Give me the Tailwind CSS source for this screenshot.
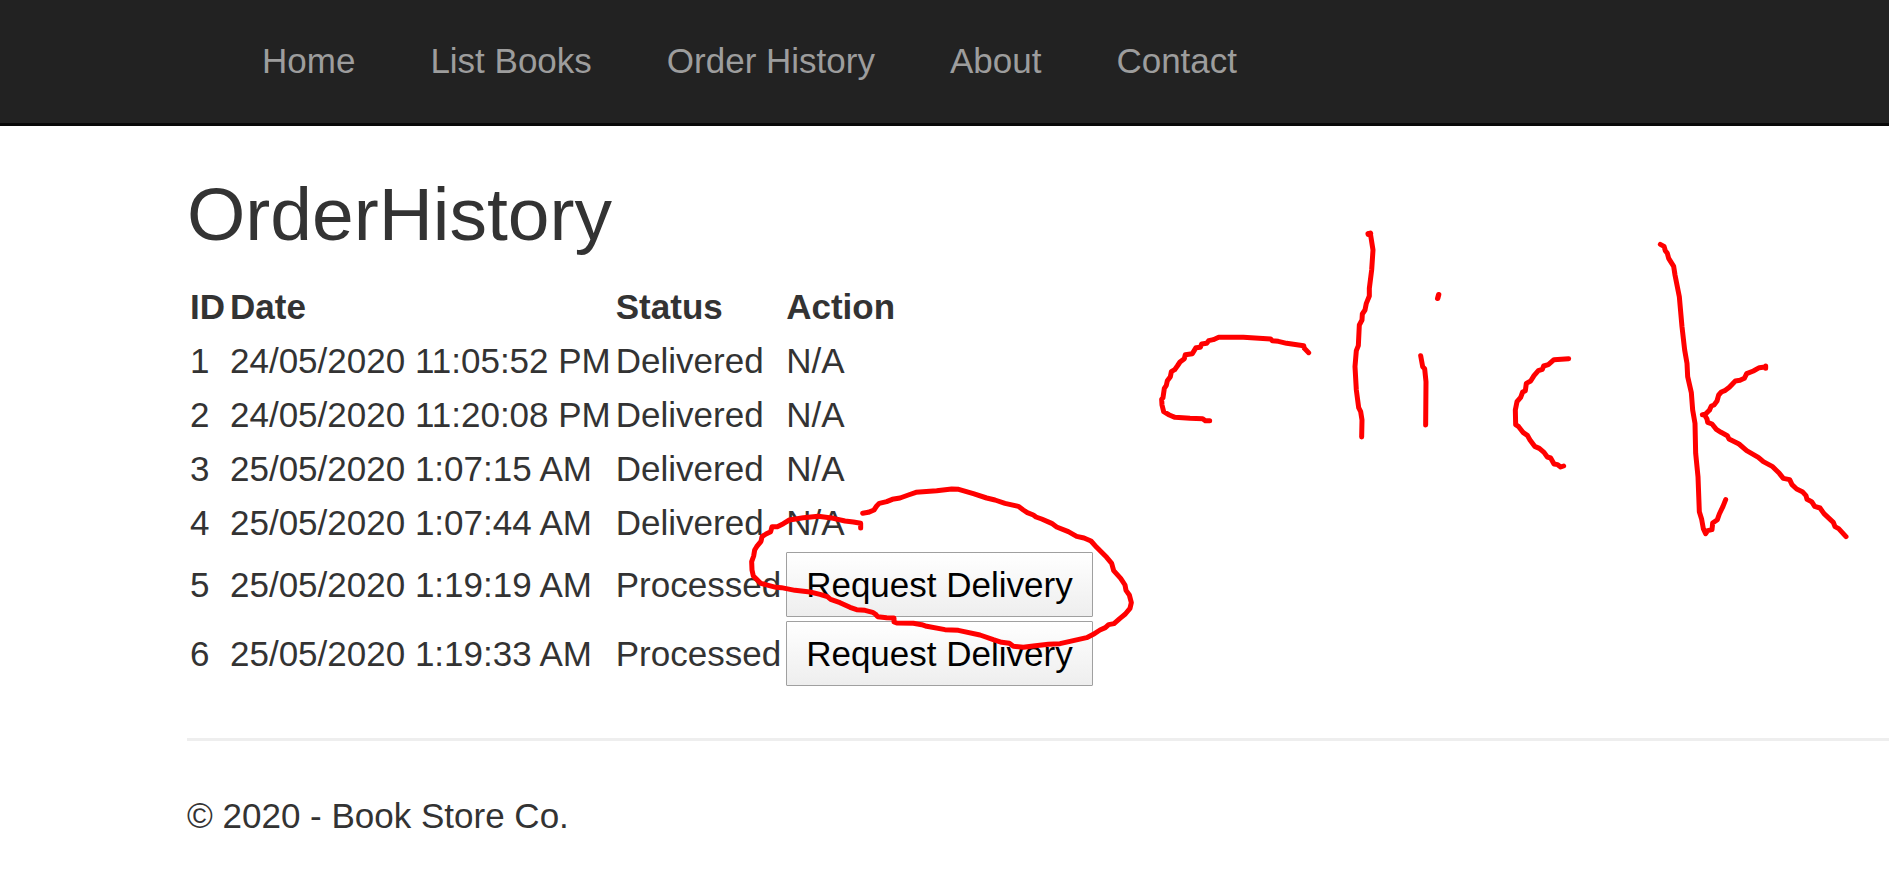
<!DOCTYPE html>
<html lang="en">
<head>
<meta charset="utf-8">
<meta name="viewport" content="width=device-width, initial-scale=1">
<title>OrderHistory</title>
<script src="https://cdn.jsdelivr.net/npm/@tailwindcss/browser@4"></script>
</head>
<body class="relative min-h-screen overflow-x-hidden bg-white font-['Liberation_Sans',Arial,sans-serif] text-[35px] leading-[50px] text-[#333]">
<header class="border-b-[3px] border-[#080808] bg-[#222]">
  <nav class="pl-[225px]">
    <ul class="flex text-[#9d9d9d]">
      <li><a href="#" class="block pt-[36px] pr-[38px] pb-[37px] pl-[37px]">Home</a></li>
      <li><a href="#" class="block pt-[36px] pr-[38px] pb-[37px] pl-[37px]">List Books</a></li>
      <li><a href="#" class="block pt-[36px] pr-[38px] pb-[37px] pl-[37px]">Order History</a></li>
      <li><a href="#" class="block pt-[36px] pr-[38px] pb-[37px] pl-[37px]">About</a></li>
      <li><a href="#" class="block pt-[36px] pr-[38px] pb-[37px] pl-[37px]">Contact</a></li>
    </ul>
  </nav>
</header>
<div class="pl-[187px]">
  <main>
    <h2 class="pt-[47px] pb-6 text-[75px] leading-[83px] font-medium">OrderHistory</h2>
    <table class="ml-px border-collapse text-left whitespace-nowrap [&_td]:py-[2px] [&_td]:pr-[3px] [&_td]:pl-[2px] [&_th]:py-[2px] [&_th]:pr-[3px] [&_th]:pl-[2px]">
      <thead>
        <tr><th>ID</th><th>Date</th><th>Status</th><th>Action</th></tr>
      </thead>
      <tbody>
        <tr><td>1</td><td>24/05/2020 11:05:52 PM</td><td>Delivered</td><td>N/A</td></tr>
        <tr><td>2</td><td>24/05/2020 11:20:08 PM</td><td>Delivered</td><td>N/A</td></tr>
        <tr><td>3</td><td>25/05/2020 1:07:15 AM</td><td>Delivered</td><td>N/A</td></tr>
        <tr><td>4</td><td>25/05/2020 1:07:44 AM</td><td>Delivered</td><td>N/A</td></tr>
        <tr><td>5</td><td>25/05/2020 1:19:19 AM</td><td>Processed</td><td><button type="button" class="block rounded-[1px] border border-[#a0a0a0] bg-linear-to-b from-white to-[#eee] px-[19px] pt-[7px] pb-[6px] text-black">Request Delivery</button></td></tr>
        <tr><td>6</td><td>25/05/2020 1:19:33 AM</td><td>Processed</td><td><button type="button" class="block rounded-[1px] border border-[#a0a0a0] bg-linear-to-b from-white to-[#eee] px-[19px] pt-[7px] pb-[6px] text-black">Request Delivery</button></td></tr>
      </tbody>
    </table>
  </main>
  <hr class="my-[50px] border-t-[3px] border-[#eee]">
  <footer><p>© 2020 - Book Store Co.</p></footer>
</div>
<!-- Freehand pen marks over the page -->
<svg class="pointer-events-none absolute top-0 left-0 h-[894px] w-[1889px] max-w-none" viewBox="0 0 1889 894" fill="none" stroke="#f00" stroke-width="15" stroke-linecap="round" stroke-linejoin="round" aria-hidden="true">
  <g transform="translate(740 470) scale(.33333)">
    <path d="M362 174V160L340 156 315 153 280 145 235 139 190 143 148 150 130 161 112 170 96 170 92 185 78 192 66 200 63 214 50 230 44 240 41 258 35 275 36 300 40 318 50 328 62 340 85 346 108 352 124 353 165 361 210 366 240 373 262 380 272 388 300 398 330 412 350 419 375 421 398 427 406 432 413 440 440 443 462 444V456L470 459 520 460 545 464 560 469 615 479 655 481 720 495 760 509 785 517 808 520 820 529 850 532 880 528 925 523 960 521 1000 512 1040 503 1060 493 1080 480 1096 473 1106 464 1122 461 1140 445 1156 432 1170 415 1174 398 1168 375 1158 361 1155 345 1142 325 1121 302 1115 280 1100 262 1070 232 1053 213 1032 204 1010 199 985 185 950 171 935 160 905 147 888 141 880 135 862 128 850 120 835 109 795 100 765 90 740 84 700 71 656 58 635 57 590 62 528 67 505 75 480 84 457 88 440 95 418 100 410 108 402 120 385 127 368 130"/>
  </g>
  <g transform="translate(1130 210) scale(.33333)">
    <path d="M536 428 523 415 521 407 470 400 445 394 427 392 422 387 340 382H266L250 389 236 392 230 400 215 402 211 412 198 413 187 431 166 434 163 446 150 456 142 468 134 479 124 485 121 500 112 512 109 526 103 535 99 563 95 568 96 585 101 605 118 615 135 622 180 625 218 626 226 632H239"/>
    <path d="M716 72 722 76 729 120 725 180 718 235V258L709 280 705 300 697 312 696 330 688 345 685 407 679 422 675 470 679 540 686 593 692 605 696 630 695 681"/>
    <path d="M715 72 721 70" stroke-width="17"/>
    <path d="M872 437 878 470 884 476 888 515 887 645"/>
  </g>
  <g transform="translate(1390 210) scale(.33333)">
    <path d="M146 254 143 265" stroke-width="16"/>
    <path d="M536 446 492 449 475 464 461 468 457 478 445 482 432 497 422 513 409 520 406 542 398 546 392 562 381 575 376 600 377 644 386 650 400 668 412 676 420 690 434 709 448 715 462 727 472 741 482 744 492 762 503 764 512 771 521 768"/>
  </g>
  <g transform="translate(1640 230) scale(.33333)">
    <path d="M61 43 72 49 76 62 82 70 86 85 101 109 105 135 118 200 126 290 134 360 141 400 143 440 154 488 158 540 165 580 167 670 174 740 178 845 185 868 190 896 197 911 203 902 216 899 218 879 232 869 238 852 249 829 257 809"/>
    <path d="M377 408V415M375 411 358 413 340 423 320 431 313 445 300 451 286 453 268 472 256 481 244 486 236 495 231 513 222 525 214 528 208 541 196 553 187 554M194 555 201 567 203 577 216 582 229 598 243 607 262 617 267 627 297 642 320 662 355 682 370 695 398 710 418 730 430 745 449 749 456 764 470 777 487 785 498 797 501 808 515 815 524 829 540 834 552 851 580 877 585 890 596 896 618 920"/>
  </g>
</svg>
</body>
</html>
